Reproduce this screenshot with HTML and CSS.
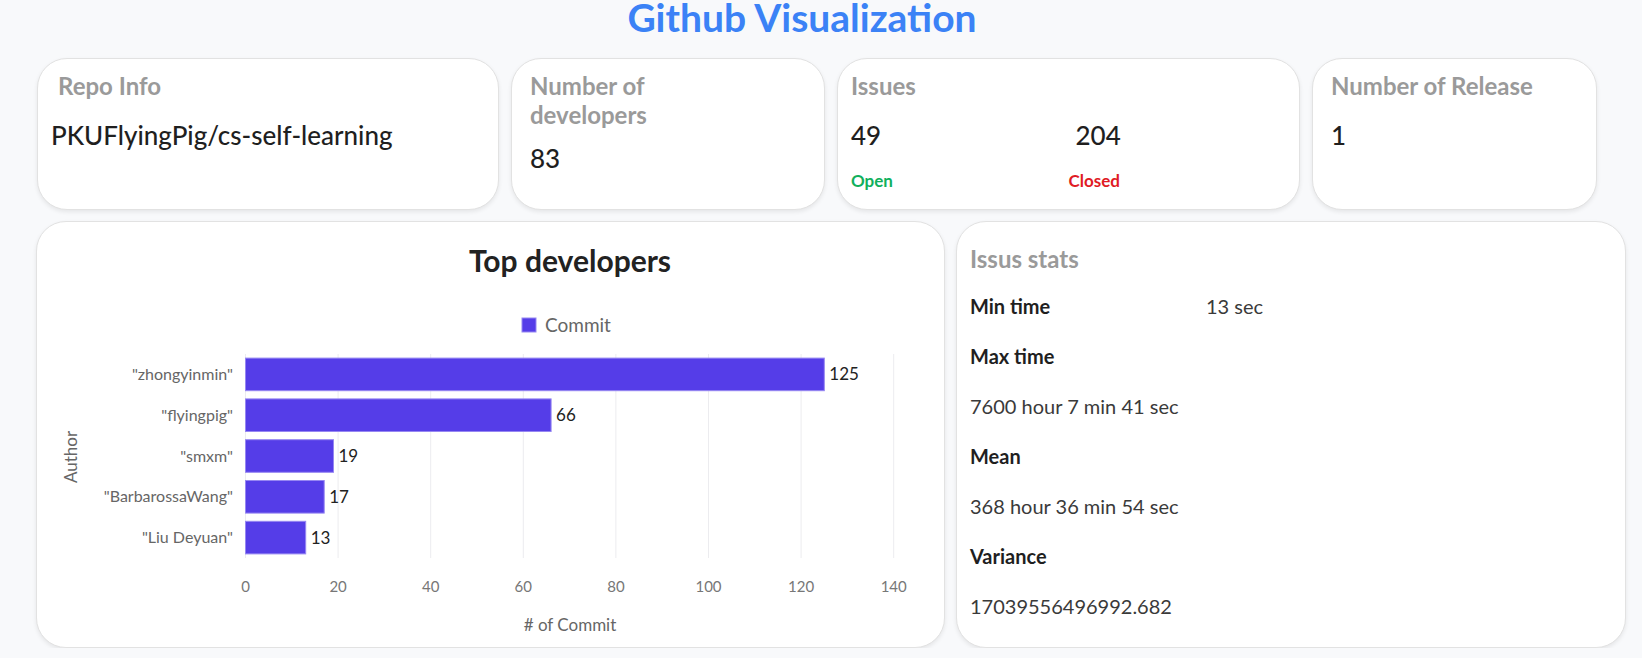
FILE: index.html
```html
<!DOCTYPE html>
<html lang="en">
<head>
    <meta charset="UTF-8">
    <meta name="viewport" content="width=device-width, initial-scale=1.0">
    <title>Github Visualization</title>
    <link rel="stylesheet" href="styles.css">
</head>
<body>
    <header class="page-header">
        <h1>Github Visualization</h1>
    </header>

    <main class="dashboard">
        <!-- Summary cards -->
        <section class="summary-row">
            <div class="card card-repo">
                <h2 class="card-title indent">Repo Info</h2>
                <p class="card-value">PKUFlyingPig/cs-self-learning</p>
            </div>
            <div class="card card-devs">
                <h2 class="card-title narrow">Number of developers</h2>
                <p class="card-value tight">83</p>
            </div>
            <div class="card card-issues">
                <h2 class="card-title">Issues</h2>
                <div class="issue-grid">
                    <p class="card-value">49</p>
                    <p class="card-value indent">204</p>
                    <span class="issue-label open">Open</span>
                    <span class="issue-label closed">Closed</span>
                </div>
            </div>
            <div class="card card-release">
                <h2 class="card-title">Number of Release</h2>
                <p class="card-value">1</p>
            </div>
        </section>

        <!-- Chart and stats -->
        <section class="detail-row">
            <div class="card chart-card">
                <svg class="chart" width="907" height="425" viewBox="0 0 907 425">
                    <text class="chart-title" x="533" y="50" text-anchor="middle">Top developers</text>

                    <rect class="bar" x="485" y="96" width="14" height="14"/>
                    <text class="legend-text" x="508" y="110">Commit</text>

                    <g class="grid">
                        <line x1="208.5" y1="132" x2="208.5" y2="336"/>
                        <line x1="301.1" y1="132" x2="301.1" y2="336"/>
                        <line x1="393.7" y1="132" x2="393.7" y2="336"/>
                        <line x1="486.3" y1="132" x2="486.3" y2="336"/>
                        <line x1="578.9" y1="132" x2="578.9" y2="336"/>
                        <line x1="671.5" y1="132" x2="671.5" y2="336"/>
                        <line x1="764.1" y1="132" x2="764.1" y2="336"/>
                        <line x1="856.7" y1="132" x2="856.7" y2="336"/>
                    </g>

                    <g>
                        <rect class="bar" x="208.5" y="136.1" width="578.8" height="32.6"/>
                        <rect class="bar" x="208.5" y="176.9" width="305.6" height="32.6"/>
                        <rect class="bar" x="208.5" y="217.7" width="88" height="32.6"/>
                        <rect class="bar" x="208.5" y="258.5" width="78.7" height="32.6"/>
                        <rect class="bar" x="208.5" y="299.3" width="60.2" height="32.6"/>
                    </g>

                    <g class="bar-value">
                        <text x="792.3" y="158.4">125</text>
                        <text x="519.1" y="199.2">66</text>
                        <text x="301.5" y="240">19</text>
                        <text x="292.2" y="280.8">17</text>
                        <text x="273.7" y="321.6">13</text>
                    </g>

                    <g class="cat-label" text-anchor="end">
                        <text x="196" y="157.9">"zhongyinmin"</text>
                        <text x="196" y="198.7">"flyingpig"</text>
                        <text x="196" y="239.5">"smxm"</text>
                        <text x="196" y="280.3">"BarbarossaWang"</text>
                        <text x="196" y="321.1">"Liu Deyuan"</text>
                    </g>

                    <g class="tick-label" text-anchor="middle">
                        <text x="208.5" y="370">0</text>
                        <text x="301.1" y="370">20</text>
                        <text x="393.7" y="370">40</text>
                        <text x="486.3" y="370">60</text>
                        <text x="578.9" y="370">80</text>
                        <text x="671.5" y="370">100</text>
                        <text x="764.1" y="370">120</text>
                        <text x="856.7" y="370">140</text>
                    </g>

                    <text class="axis-title" x="533" y="409" text-anchor="middle"># of Commit</text>
                    <text class="axis-title" transform="translate(40,235) rotate(-90)" text-anchor="middle">Author</text>
                </svg>
            </div>

            <div class="card stats-card">
                <h2 class="card-title">Issus stats</h2>
                <div class="stats-grid">
                    <span class="stat-label">Min time</span>
                    <span class="stat-value">13 sec</span>
                    <span class="stat-label wide">Max time</span>
                    <span class="stat-value wide">7600 hour 7 min 41 sec</span>
                    <span class="stat-label wide">Mean</span>
                    <span class="stat-value wide">368 hour 36 min 54 sec</span>
                    <span class="stat-label wide">Variance</span>
                    <span class="stat-value wide">17039556496992.682</span>
                </div>
            </div>
        </section>
    </main>
</body>
</html>
```

FILE: styles.css
```css
* {
    box-sizing: border-box;
}
body {
    font-family: Lato, "Open Sans", sans-serif;
    margin: 0;
    padding: 0;
    background-color: #f8f9fb;
    color: #222;
}
.page-header {
    padding-right: 38px;
    text-align: center;
}
h1 {
    margin: 0;
    font-size: 39px;
    line-height: 34px;
    font-weight: 700;
    color: #3b82f6;
}
.dashboard {
    padding-top: 24px;
}
.card {
    background: #fff;
    border: 1px solid #e2e2e2;
    border-radius: 30px;
    box-shadow: 0 2px 4px rgba(0, 0, 0, 0.08);
}
.summary-row {
    display: flex;
    gap: 12px;
    padding-left: 37px;
}
.summary-row .card {
    height: 152px;
    padding: 12px 13px 0;
}
.card-repo {
    width: 462px;
}
.card-devs {
    width: 314px;
    padding-left: 18px !important;
}
.card-issues {
    width: 463px;
}
.card-release {
    width: 285px;
    padding-left: 18px !important;
}
.card-title {
    margin: 0;
    font-size: 24px;
    line-height: 29px;
    font-weight: 700;
    color: #9a9a9a;
}
.card-title.narrow {
    max-width: 200px;
}
.card-value {
    margin: 21px 0 0;
    font-size: 26px;
    line-height: 29px;
    font-weight: 500;
    color: #1f1f1f;
}
.card-value.tight {
    margin-top: 15px;
}
.indent {
    padding-left: 7px;
}
.issue-grid {
    display: grid;
    grid-template-columns: 1fr 1fr;
}
.issue-label {
    margin-top: 21px;
    font-size: 17px;
    line-height: 20px;
    font-weight: 700;
}
.open {
    color: #10b05c;
}
.closed {
    color: #e01b24;
}
.detail-row {
    display: flex;
    gap: 11px;
    padding-left: 36px;
    margin-top: 11px;
}
.chart-card {
    width: 909px;
    height: 427px;
}
.chart {
    display: block;
    font-family: Lato, "Open Sans", sans-serif;
}
.chart-title {
    font-size: 30px;
    font-weight: 700;
    fill: #222;
}
.legend-text {
    font-size: 19px;
    fill: #666;
}
.grid line {
    stroke: #ececef;
    stroke-width: 1;
}
.bar {
    fill: #553de8;
    stroke: #9687f2;
    stroke-width: 1;
}
.bar-value {
    font-size: 17px;
    fill: #222;
}
.cat-label {
    font-size: 16px;
    fill: #666;
}
.tick-label {
    font-size: 15px;
    fill: #777;
}
.axis-title {
    font-size: 17px;
    fill: #666;
}
.stats-card {
    width: 670px;
    height: 427px;
    padding: 22px 13px 0;
}
.stats-grid {
    display: grid;
    grid-template-columns: 236px 1fr;
    margin-top: 8px;
}
.stat-label,
.stat-value {
    font-size: 20px;
    line-height: 50px;
}
.stat-label {
    font-weight: 700;
    color: #1f1f1f;
}
.stat-value {
    color: #3a3a3a;
}
.wide {
    grid-column: 1 / -1;
}
```
